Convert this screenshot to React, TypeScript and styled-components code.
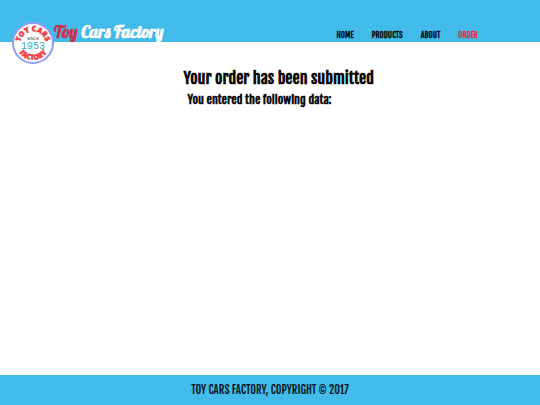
import React from "react";
import styled, { createGlobalStyle } from "styled-components";

const GlobalStyle = createGlobalStyle`
  * { box-sizing: border-box; }
  body {
    margin: 0;
    background: #fff;
    color: #0b0b0b;
    font-family: "Fjalla One", "Liberation Sans Narrow", "Liberation Sans", sans-serif;
  }
`;

const Page = styled.div`
  display: flex;
  flex-direction: column;
  min-height: 100vh;
`;

const Header = styled.header`
  display: flex;
  justify-content: space-between;
  height: 42px;
  padding: 22px 62px 0 12px;
  background: #42bbea;
`;

const Brand = styled.a`
  display: flex;
  align-items: flex-start;
  color: #fff;
  text-decoration: none;
  white-space: nowrap;
`;

const Badge = styled.svg`
  flex: none;
  width: 42px;
  height: 42px;
`;

const BrandName = styled.span`
  font: bold 17px/20px Lobster, "Liberation Serif", serif;
`;

const BrandAccent = styled.span`
  color: #c9324f;
`;

const Nav = styled.nav`
  display: flex;
  gap: 18px;
  padding-top: 6px;
`;

const NavLink = styled.a<{ $active?: boolean }>`
  color: ${({ $active }) => ($active ? "#dc3550" : "#06141a")};
  font-size: 8px;
  font-weight: bold;
  line-height: 14px;
  text-decoration: none;
  text-transform: uppercase;
`;

const Main = styled.main`
  flex: 1;
  padding: 24px 0 0 34%;
`;

const Title = styled.h1`
  margin: 0;
  font-size: 16px;
  line-height: 24px;
`;

const Subtitle = styled.h2`
  margin: 0;
  padding-left: 4px;
  font-size: 12px;
  line-height: 20px;
`;

const Footer = styled.footer`
  padding: 7px 0;
  background: #42bbea;
  color: #06141a;
  font-size: 11px;
  line-height: 16px;
  text-align: center;
  text-transform: uppercase;
`;

const links = ["Home", "Products", "About", "Order"];

function Logo() {
  return (
    <Badge viewBox="0 0 42 42" aria-hidden="true">
      <defs>
        <path id="upper" d="M8.500 22A12.500 12.500 0 0 1 33.500 22" />
        <path id="lower" d="M3.500 20.500A17.500 17.500 0 0 0 38.500 20.500" />
      </defs>
      <circle cx="21" cy="21" r="20" fill="#fff" stroke="#929bf2" strokeWidth="2" />
      <g fill="#ee4850" fontFamily="'Lilita One', 'Luckiest Guy', Lato, sans-serif" fontWeight="900" textAnchor="middle">
        <text fontSize="8"><textPath href="#upper" startOffset="50%">TOY CARS</textPath></text>
        <text fontSize="8"><textPath href="#lower" startOffset="50%">FACTORY</textPath></text>
      </g>
      <text x="21" y="18" fontSize="4" fontFamily="Liberation Sans, sans-serif" fill="#333" textAnchor="middle">SINCE</text>
      <text x="21" y="27" fontSize="10" fontFamily="Liberation Mono, monospace" fill="#3ba8cb" textAnchor="middle">1953</text>
    </Badge>
  );
}

export default function App() {
  return (
    <>
      <GlobalStyle />
      <Page>
        <Header>
          <Brand href="#home">
            <Logo />
            <BrandName><BrandAccent>Toy</BrandAccent> Cars Factory</BrandName>
          </Brand>
          <Nav aria-label="Main">
            {links.map((name) => (
              <NavLink key={name} href={`#${name.toLowerCase()}`} $active={name === "Order"}>{name}</NavLink>
            ))}
          </Nav>
        </Header>
        <Main>
          <Title>Your order has been submitted</Title>
          <Subtitle>You entered the following data:</Subtitle>
        </Main>
        <Footer>Toy Cars Factory, Copyright © 2017</Footer>
      </Page>
    </>
  );
}
